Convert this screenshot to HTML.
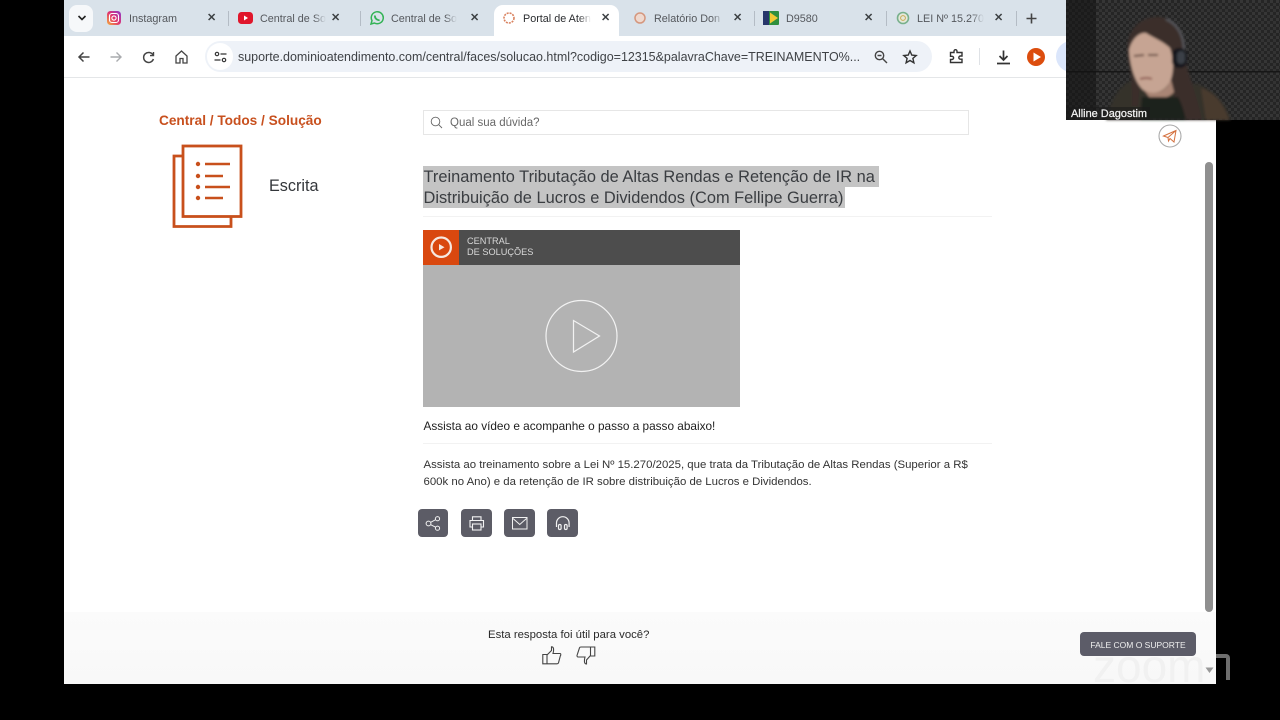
<!DOCTYPE html>
<html lang="pt-BR"><head><meta charset="utf-8"><title>Portal de Atendimento</title>
<style>
html,body{margin:0;padding:0;width:1280px;height:720px;overflow:hidden;background:#000;font-family:"Liberation Sans",sans-serif}
.a{position:absolute;white-space:nowrap}
#page{position:absolute;left:64px;top:0;width:1152px;height:684px;background:#fff;overflow:hidden;filter:blur(.3px)}
.tabt{position:absolute;top:13px;font-size:10.8px;color:#55585d;height:13px;line-height:13px;overflow:hidden;white-space:nowrap}
.f{-webkit-mask-image:linear-gradient(90deg,#000 82%,transparent);mask-image:linear-gradient(90deg,#000 82%,transparent)}
.x{position:absolute;top:11px;font-size:11px;color:#3c4043;font-weight:bold;line-height:14px}
.sep{position:absolute;top:11px;width:1px;height:15px;background:#b4bcc5}
.btn{position:absolute;top:509px;width:30px;height:28px;background:#5c5c66;border-radius:4px}
svg{position:absolute;overflow:visible}
</style></head><body>
<div id="page">
<!-- tab strip -->
<div class="a" style="left:0;top:0;width:1152px;height:36px;background:#d9e2ea"></div>
<div class="a" style="left:5px;top:5px;width:24px;height:27px;background:#f6f8fa;border-radius:8px"></div>
<svg style="left:13px;top:14px" width="10" height="8"><path d="M1.5 2 L5 5.5 L8.5 2" fill="none" stroke="#222" stroke-width="1.6"/></svg>

<svg style="left:43px;top:11px" width="14" height="14" viewBox="0 0 14 14"><defs><linearGradient id="ig" x1="0" y1="1" x2="1" y2="0"><stop offset="0" stop-color="#f5b03c"/><stop offset=".5" stop-color="#e0336e"/><stop offset="1" stop-color="#8a3ad0"/></linearGradient></defs><rect width="14" height="14" rx="3.5" fill="url(#ig)"/><rect x="2.5" y="2.5" width="9" height="9" rx="2.5" fill="none" stroke="#fff" stroke-width="1.1"/><circle cx="7" cy="7" r="2.1" fill="none" stroke="#fff" stroke-width="1.1"/></svg>
<div class="tabt" style="left:65px;width:60px">Instagram</div><div class="x" style="left:143px">✕</div>
<div class="sep" style="left:164px"></div>

<svg style="left:174px;top:12px" width="15" height="12"><rect width="15" height="12" rx="3.5" fill="#e0162b"/><path d="M6 3.5 L10 6 L6 8.5Z" fill="#fff"/></svg>
<div class="tabt f" style="left:196px;width:66px">Central de Sol</div><div class="x" style="left:267px">✕</div>
<div class="sep" style="left:296px"></div>

<svg style="left:306px;top:11px" width="14" height="14" viewBox="0 0 14 14"><path d="M1 13 L2 9.6 A6 6 0 1 1 4.4 12 Z" fill="none" stroke="#34b356" stroke-width="1.5"/><path d="M5 4.5 C4.5 7 7 9.5 9.6 9.2" fill="none" stroke="#34b356" stroke-width="1.8"/></svg>
<div class="tabt f" style="left:327px;width:66px">Central de Sol</div><div class="x" style="left:406px">✕</div>

<!-- active tab -->
<div class="a" style="left:430px;top:5px;width:125px;height:32px;background:#fff;border-radius:9px 9px 0 0"></div>
<svg style="left:438px;top:11px" width="14" height="14"><circle cx="7" cy="7" r="5" fill="none" stroke="#d9825f" stroke-width="1.6" stroke-dasharray="2 1"/></svg>
<div class="tabt f" style="left:459px;width:68px;color:#2b2d30">Portal de Aten</div><div class="x" style="left:537px">✕</div>

<svg style="left:569px;top:11px" width="14" height="14"><circle cx="7" cy="7" r="5" fill="#efd9cf" stroke="#d5977e" stroke-width="1.5"/></svg>
<div class="tabt f" style="left:590px;width:70px">Relatório Don</div><div class="x" style="left:669px">✕</div>
<div class="sep" style="left:690px"></div>

<svg style="left:699px;top:11px" width="16" height="14"><rect width="16" height="14" rx="1" fill="#2f8f3e"/><path d="M7 1.5 L15 7 L7 12.500Z" fill="#f1c933"/><rect width="6" height="14" fill="#27366b"/></svg>
<div class="tabt" style="left:722px;width:60px">D9580</div><div class="x" style="left:800px">✕</div>
<div class="sep" style="left:822px"></div>

<svg style="left:832px;top:11px" width="14" height="14"><circle cx="7" cy="7" r="5.5" fill="#e5e8da" stroke="#78b08c" stroke-width="1.6"/><circle cx="7" cy="7" r="2.4" fill="none" stroke="#c7a954"/></svg>
<div class="tabt f" style="left:853px;width:67px">LEI Nº 15.270</div><div class="x" style="left:930px">✕</div>
<div class="sep" style="left:952px"></div>
<svg style="left:962px;top:13px" width="11" height="11"><path d="M5.5 0.5V10.5M0.5 5.5H10.5" stroke="#444" stroke-width="1.6"/></svg>

<!-- toolbar -->
<div class="a" style="left:0;top:36px;width:1152px;height:41px;background:#fff;border-bottom:1px solid #e4e6e8"></div>
<svg style="left:14px;top:51px" width="12" height="12"><path d="M11.5 6H1M5.5 1.5 L1 6 L5.5 10.5" fill="none" stroke="#444" stroke-width="1.5"/></svg>
<svg style="left:46px;top:51px" width="12" height="12"><path d="M0.5 6H11M6.5 1.5 L11 6 L6.5 10.5" fill="none" stroke="#a9abae" stroke-width="1.4"/></svg>
<svg style="left:78px;top:51px" width="13" height="13" viewBox="0 0 13 13"><path d="M11 4 A5 5 0 1 0 11.4 8" fill="none" stroke="#444" stroke-width="1.5"/><path d="M11.5 1V4.6H8" fill="none" stroke="#444" stroke-width="1.4"/></svg>
<svg style="left:111px;top:50px" width="13" height="14" viewBox="0 0 13 14"><path d="M1 6 L6.5 1 L12 6 V13 H8 V8.5 H5 V13 H1Z" fill="none" stroke="#444" stroke-width="1.3"/></svg>
<div class="a" style="left:141px;top:41px;width:727px;height:31px;background:#eef2f8;border-radius:16px"></div>
<div class="a" style="left:143px;top:43px;width:26px;height:27px;background:#fff;border-radius:14px"></div>
<svg style="left:150px;top:51px" width="13" height="12"><circle cx="3" cy="3" r="1.7" fill="none" stroke="#333" stroke-width="1.2"/><path d="M6.5 3H12.5M0.5 9H6.5" stroke="#333" stroke-width="1.3"/><circle cx="10" cy="9" r="1.7" fill="none" stroke="#333" stroke-width="1.2"/></svg>
<div class="a" style="left:174px;top:49px;width:630px;height:16px;line-height:16px;font-size:12.48px;color:#3f4246;overflow:hidden">suporte.dominioatendimento.com/central/faces/solucao.html?codigo=12315&amp;palavraChave=TREINAMENTO%...</div>
<svg style="left:810px;top:50px" width="14" height="14"><circle cx="5.5" cy="5.5" r="4.2" fill="none" stroke="#444" stroke-width="1.4"/><path d="M8.6 8.6 L13 13M3.5 5.5H7.5" stroke="#444" stroke-width="1.4"/></svg>
<svg style="left:839px;top:50px" width="14" height="14" viewBox="0 0 14 14"><path d="M7 1 L8.8 5.1 L13.2 5.5 L9.9 8.4 L10.9 12.8 L7 10.5 L3.1 12.8 L4.1 8.4 L0.8 5.5 L5.2 5.1Z" fill="none" stroke="#333" stroke-width="1.4"/></svg>
<svg style="left:885px;top:49px" width="15" height="15" viewBox="0 0 15 15"><path d="M1.5 3.5H5V2.2a1.5 1.5 0 0 1 3 0V3.5H13V7H11.4a1.6 1.6 0 0 0 0 3.2H13V13.5H1.5V10.5H3a1.6 1.6 0 0 0 0-3.2H1.5Z" fill="none" stroke="#333" stroke-width="1.4"/></svg>
<div class="a" style="left:915px;top:48px;width:1px;height:17px;background:#dfe2e6"></div>
<svg style="left:932px;top:50px" width="15" height="15"><path d="M7.5 0.5V9.5M3.5 6 L7.5 10 L11.5 6M1 13.5H14" fill="none" stroke="#333" stroke-width="1.7"/></svg>
<svg style="left:963px;top:48px" width="18" height="18"><circle cx="9" cy="9" r="9" fill="#dc4d0e"/><path d="M6.5 4.5 L14 9 L6.5 13.5Z" fill="#fff"/></svg>
<div class="a" style="left:992px;top:41px;width:30px;height:31px;background:#dbe6fb;border-radius:16px 0 0 16px"></div>

<!-- left column -->
<div class="a" style="left:95px;top:113px;font-size:13.65px;line-height:16px;font-weight:bold;color:#c8501e">Central / Todos / Solução</div>
<svg style="left:108px;top:144px" width="72" height="86" viewBox="0 0 72 86" fill="none" stroke="#c8501c">
<path d="M10 12H2V82.500H59V73" stroke-width="2.8"/>
<rect x="11" y="2" width="58" height="70.500" stroke-width="2.8"/>
<g stroke-width="2.4"><path d="M33 20H58"/><path d="M33 32H51"/><path d="M33 43H58"/><path d="M33 54H51"/></g>
<g fill="#c8501c" stroke="none"><circle cx="26" cy="20" r="2.200"/><circle cx="26" cy="32" r="2.200"/><circle cx="26" cy="43" r="2.200"/><circle cx="26" cy="54" r="2.200"/></g>
</svg>
<div class="a" style="left:205px;top:177px;font-size:16.2px;line-height:19px;color:#33363a">Escrita</div>

<!-- search -->
<div class="a" style="left:359px;top:110px;width:544px;height:23px;border:1px solid #e6e6e6"></div>
<svg style="left:366px;top:116px" width="13" height="13"><circle cx="5.500" cy="5.500" r="4.300" fill="none" stroke="#666" stroke-width=".9"/><path d="M8.700 8.700L12 12" stroke="#666" stroke-width=".9"/></svg>
<div class="a" style="left:386px;top:116px;font-size:11.5px;line-height:14px;color:#686868">Qual sua dúvida?</div>

<!-- title -->
<div class="a" style="left:359px;top:166px;width:456px;height:21px;background:#c4c4c4"></div>
<div class="a" style="left:359px;top:187px;width:422px;height:21px;background:#c4c4c4"></div>
<div class="a" style="left:359.5px;top:167px;font-size:16.4px;line-height:21px;color:#3a3d41">Treinamento Tributação de Altas Rendas e Retenção de IR na<br>Distribuição de Lucros e Dividendos (Com Fellipe Guerra)</div>
<div class="a" style="left:359px;top:216px;width:569px;height:1px;background:#f2f2f2"></div>

<!-- video -->
<div class="a" style="left:359px;top:230px;width:317px;height:177px;background:#b3b3b3"></div>
<div class="a" style="left:359px;top:230px;width:317px;height:35px;background:#4d4d4d"></div>
<div class="a" style="left:359px;top:230px;width:36px;height:35px;background:#d9480f"></div>
<svg style="left:366px;top:236px" width="23" height="23"><circle cx="11.2" cy="11.2" r="9.7" fill="none" stroke="#f6e8e0" stroke-width="2.2"/><path d="M9 8 L14.5 11.2 L9 14.4Z" fill="#f6e8e0"/></svg>
<div class="a" style="left:403px;top:236px;font-size:9.2px;line-height:11px;color:#d8d8d8">CENTRAL<br>DE SOLUÇÕES</div>
<svg style="left:481px;top:300px" width="74" height="74"><circle cx="36.500" cy="36" r="35.500" fill="none" stroke="#f2f2f2" stroke-width="1.200"/><path d="M28.500 20.500 V52 L54.500 36Z" fill="none" stroke="#f2f2f2" stroke-width="1.200"/></svg>

<div class="a" style="left:359.5px;top:419px;font-size:11.8px;line-height:15px;color:#1e1e1e">Assista ao vídeo e acompanhe o passo a passo abaixo!</div>
<div class="a" style="left:359px;top:443px;width:569px;height:1px;background:#f2f2f2"></div>
<div class="a" style="left:359.5px;top:457px;font-size:11.4px;line-height:17px;color:#333">Assista ao treinamento sobre a Lei Nº 15.270/2025, que trata da Tributação de Altas Rendas (Superior a R$<br>600k no Ano) e da retenção de IR sobre distribuição de Lucros e Dividendos.</div>

<!-- action buttons -->
<div class="btn" style="left:354px"><svg style="left:7px;top:7px" width="16" height="15" fill="none" stroke="#f2f2f2" stroke-width="1"><circle cx="3.500" cy="7.500" r="2.400"/><circle cx="12.500" cy="2.700" r="2.100"/><circle cx="12.500" cy="12.200" r="2.100"/><path d="M5.700 6.300 L10.600 3.700M5.700 8.700 L10.600 11.200"/></svg></div>
<div class="btn" style="left:397px;width:31px"><svg style="left:8px;top:7px" width="16" height="15" fill="none" stroke="#f2f2f2" stroke-width="1.100"><path d="M3.500 4.500V0.800H12V4.500M3.500 11H1V4.500H14.500V11H12"/><rect x="3.500" y="8" width="8.500" height="6"/></svg></div>
<div class="btn" style="left:440px;width:31px"><svg style="left:8px;top:8px" width="16" height="13" fill="none" stroke="#f2f2f2" stroke-width="1"><rect x="0.500" y="0.500" width="14.500" height="11.500"/><path d="M1 1.500 L7.750 7.500 L14.500 1.500"/></svg></div>
<div class="btn" style="left:483px;width:31px"><svg style="left:8px;top:7px" width="16" height="15" fill="none" stroke="#f2f2f2" stroke-width="1.200"><path d="M1.500 11V7a6.300 6.300 0 0 1 12.600 0V11"/><rect x="3.500" y="8.500" width="2.600" height="5" rx="1.300"/><rect x="9.500" y="8.500" width="2.600" height="5" rx="1.300"/></svg></div>

<!-- footer -->
<div class="a" style="left:0;top:612px;width:1152px;height:72px;background:linear-gradient(#fbfbfb,#f8f8f8)"></div>
<div class="a" style="left:424px;top:628px;font-size:11.35px;line-height:14px;color:#2a2a2a">Esta resposta foi útil para você?</div>
<svg style="left:478px;top:646px" width="20" height="19" fill="none" stroke="#444" stroke-width="1.100"><path d="M0.800 8.500H5V17.800H0.800ZM5 9 L9.500 4.500 V0.800 C12 0.800 12 4 11 7.500 H18 C19 7.500 19 9 18.300 10 L16.500 16.800 C16.200 17.600 15.500 17.800 15 17.800 H5"/></svg>
<svg style="left:512px;top:646px" width="20" height="19" fill="none" stroke="#444" stroke-width="1.100"><path d="M18.800 1H14.500V10H18.800ZM14.500 9.500 L10.500 14 V18 C8 18 8 14.500 9 11 H2 C1 11 0.700 9.500 1.300 8.500 L3.500 1.800 C3.800 1 4.500 1 5 1 H14.500"/></svg>
<div class="a" style="left:1029px;top:643px;font-size:46px;line-height:46px;color:#f1f1f1">zoom</div>
<div class="a" style="left:1016px;top:632px;width:116px;height:24px;background:#5c5c68;border-radius:4px;font-size:8.5px;line-height:26px;text-align:center;color:#efefef">FALE COM O SUPORTE</div>

<!-- scrollbar -->
<div class="a" style="left:1141px;top:162px;width:8px;height:450px;background:#8f8f8f;border-radius:4px"></div>
<svg style="left:1141px;top:667px" width="9" height="7"><path d="M0.500 0.500H8.500L4.500 6Z" fill="#999"/></svg>
<!-- send icon -->
<svg style="left:1094px;top:124px" width="24" height="24" fill="none"><circle cx="12" cy="12" r="11" stroke="#aaa" stroke-width="1.100"/><path d="M5.500 12 L18 6.500 L16 18 L12 14.500 L10.500 17 L10 13.500 Z M10 13.500 L18 6.500" stroke="#d4713f" stroke-width="1"/></svg>
</div>

<!-- zoom watermark over the black margin -->
<div class="a" style="left:1216px;top:650px;width:14px;height:30px;overflow:hidden"><div class="a" style="left:10px;top:8px;width:4px;height:22px;background:#6e6e6e"></div><div class="a" style="left:0;top:4px;width:14px;height:4px;background:#6e6e6e;border-radius:0 5px 0 0"></div></div>

<!-- webcam -->
<svg style="left:1066px;top:0" width="214" height="120" viewBox="0 0 214 120">
<defs>
<pattern id="foam" width="6" height="6" patternUnits="userSpaceOnUse"><rect width="6" height="6" fill="#252525"/><rect width="3" height="3" fill="#363636"/><rect x="3" y="3" width="3" height="3" fill="#333"/></pattern>
<filter id="b1"><feGaussianBlur stdDeviation="1.200"/></filter>
</defs>
<rect width="214" height="120" fill="url(#foam)"/>
<rect width="30" height="120" fill="#151515" opacity=".6"/>
<rect y="71" width="214" height="1.500" fill="#111" opacity=".8"/>
<g filter="url(#b1)">
<path d="M40 120 C44 104 50 90 62 82 L132 84 C150 92 160 104 165 120Z" fill="#35332a"/>
<path d="M62 60 C58 32 72 17 92 17 C108 17 116 30 118 50 C120 72 130 90 136 120 H112 L106 84 H74 L72 106 H66 C66 90 66 78 62 60Z" fill="#3a2e29"/>
<path d="M135 88 C148 92 158 104 163 120 H140Z" fill="#4a3a2f"/>
<path d="M63 50 C66 38 74 32 80 33 C88 38 98 42 104 48 C108 60 108 72 104 82 C98 92 88 95 80 92 C70 86 64 68 63 50Z" fill="#c6a493"/>
<path d="M78 90 C88 96 100 92 105 80 L108 92 C104 97 96 100 84 98Z" fill="#a98574"/>
<path d="M76 97 H112 C116 104 118 112 120 120 H74Z" fill="#1f201c"/>
<path d="M68 56 l10 -1 M82 55 l10 0" stroke="#6b5045" stroke-width="2"/>
<path d="M74 79 q7 -2 12 0" stroke="#8f5c52" stroke-width="2" fill="none"/>
<path d="M100 19 C112 24 118 36 118 50" stroke="#55555a" stroke-width="2.500" fill="none"/>
<rect x="106" y="48" width="15" height="20" rx="7" fill="#16181b"/>
<rect x="111" y="51" width="8" height="13" rx="4" fill="#3b4047"/>
</g>
<rect y="107" width="84" height="13" fill="#1b1b1b" opacity=".6"/>
<text x="5" y="117" font-family="Liberation Sans, sans-serif" font-size="11" textLength="76" lengthAdjust="spacingAndGlyphs" stroke="#f2f2f2" stroke-width=".25" fill="#f2f2f2">Alline Dagostim</text>
</svg>
</body></html>
